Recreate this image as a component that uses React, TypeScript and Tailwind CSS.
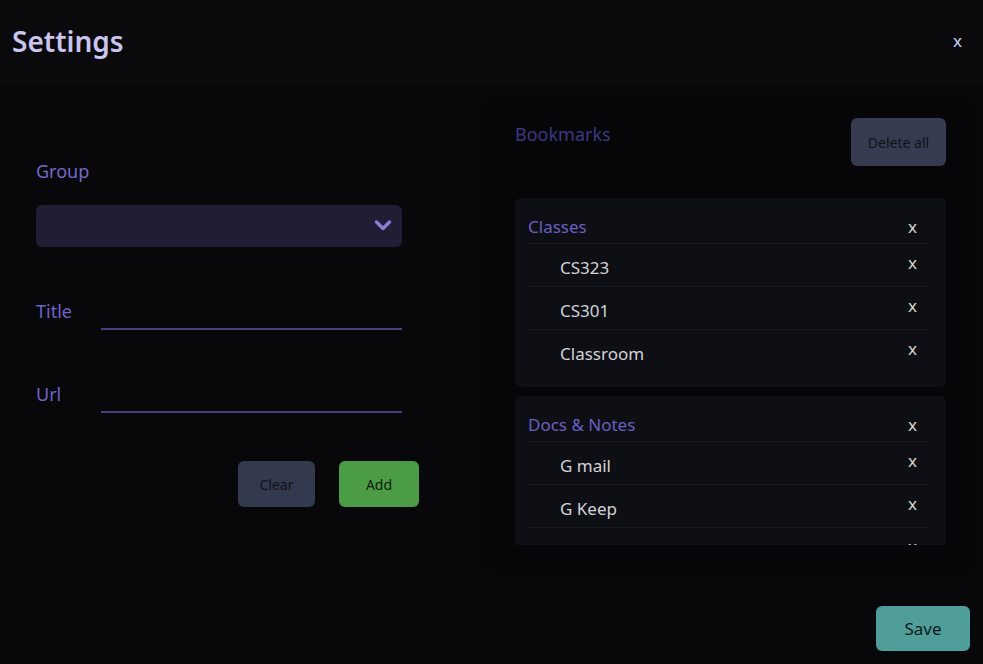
import { useState } from "react";

type Bookmark = { title: string; url: string };
type Group = { name: string; items: Bookmark[] };

const initialGroups: Group[] = [
    {
        name: "Classes",
        items: [
            { title: "CS323", url: "" },
            { title: "CS301", url: "" },
            { title: "Classroom", url: "" },
        ],
    },
    {
        name: "Docs & Notes",
        items: [
            { title: "G mail", url: "" },
            { title: "G Keep", url: "" },
            { title: "G Drive", url: "" },
        ],
    },
];

const App = () => {
    const [groups, setGroups] = useState<Group[]>(initialGroups);
    const [group, setGroup] = useState("");
    const [title, setTitle] = useState("");
    const [url, setUrl] = useState("");

    const removeGroup = (name: string) => setGroups(groups.filter((g) => g.name !== name));
    const removeItem = (name: string, idx: number) =>
        setGroups(
            groups.map((g) =>
                g.name === name ? { ...g, items: g.items.filter((_, i) => i !== idx) } : g
            )
        );

    return (
        <div
            className="w-full h-[664px] bg-[#08080b] flex flex-col overflow-hidden"
            style={{ fontFamily: '"Noto Sans", "Open Sans", sans-serif' }}
        >
            {/* header */}
            <header className="h-[85px] shrink-0 bg-[#0a0a0d] flex items-center justify-between pl-3 pr-[21px]">
                <h1 className="text-[28px] font-semibold text-[#c9c5ee] leading-none pb-1">Settings</h1>
                <button className="text-[17px] text-[#c9d2f5] leading-none pb-1">x</button>
            </header>

            <main className="flex flex-1">
                {/* form */}
                <section className="w-[490px] pl-9 pt-[73px] shrink-0">
                    <label className="block text-[18px] leading-[27px] text-[#7468c8]">Group</label>
                    <div className="relative mt-5 w-[366px]">
                        <select
                            value={group}
                            onChange={(e) => setGroup(e.target.value)}
                            className="w-full h-[42px] rounded-md bg-[#211d35] appearance-none outline-none text-[#c9c5ee] px-3"
                        >
                            <option value=""></option>
                            {groups.map((g) => (
                                <option key={g.name} value={g.name}>{g.name}</option>
                            ))}
                        </select>
                        <svg
                            className="absolute right-[10px] top-[14px] pointer-events-none"
                            width="18"
                            height="13"
                            viewBox="0 0 18 13"
                        >
                            <path d="M2.5 3 L9 9.5 L15.5 3" fill="none" stroke="#8a7ed3" strokeWidth="3.4" strokeLinecap="round" strokeLinejoin="round" />
                        </svg>
                    </div>

                    <div className="flex items-end mt-[47px] w-[366px]">
                        <span className="w-[65px] text-[18px] leading-[27px] text-[#6f63c9] pb-[5px]">Title</span>
                        <input
                            value={title}
                            onChange={(e) => setTitle(e.target.value)}
                            className="flex-1 h-[36px] bg-transparent border-b-2 border-[#4b3f80] outline-none text-[#d0d0d8]"
                        />
                    </div>

                    <div className="flex items-end mt-[47px] w-[366px]">
                        <span className="w-[65px] text-[18px] leading-[27px] text-[#6f63c9] pb-[5px]">Url</span>
                        <input
                            value={url}
                            onChange={(e) => setUrl(e.target.value)}
                            className="flex-1 h-[36px] bg-transparent border-b-2 border-[#4b3f80] outline-none text-[#d0d0d8]"
                        />
                    </div>

                    <div className="flex justify-end gap-6 mt-[48px] w-[383px]">
                        <button
                            onClick={() => { setTitle(""); setUrl(""); setGroup(""); }}
                            className="w-[77px] h-[46px] rounded-md bg-[#343a4e] text-[14px] text-[#10111a]"
                        >
                            Clear
                        </button>
                        <button className="w-[80px] h-[46px] rounded-md bg-[#4c9c45] text-[14px] text-[#0f1a10]">
                            Add
                        </button>
                    </div>
                </section>

                {/* bookmarks */}
                <section className="mt-5 w-[478px] h-[460px] rounded-xl bg-[#060608] shadow-[0_0_10px_rgba(0,0,0,0.6)] pl-[25px] pr-[22px] pt-[13px] flex flex-col">
                    <div className="flex justify-between items-start">
                        <h2 className="text-[18px] leading-[27px] text-[#3d3783] pt-[3px]">Bookmarks</h2>
                        <button
                            onClick={() => setGroups([])}
                            className="w-[95px] h-[48px] rounded-md bg-[#363b4f] text-[14px] text-[#10111a]"
                        >
                            Delete all
                        </button>
                    </div>

                    <div className="mt-8 h-[347px] overflow-hidden flex flex-col gap-[9px]">
                        {groups.map((g) => (
                            <div key={g.name} className="rounded-md bg-[#0e0f14] pl-[13px] pr-[18px] pt-3 pb-[14px] shrink-0">
                                <div className="h-[34px] flex items-center justify-between border-b border-[#181a21]">
                                    <span className="text-[17px] text-[#6a5fc0]">{g.name}</span>
                                    <button
                                        onClick={() => removeGroup(g.name)}
                                        className="text-[17px] text-[#d9d5c8] mr-[11px]"
                                    >
                                        x
                                    </button>
                                </div>
                                {g.items.map((b, i) => (
                                    <div
                                        key={b.title}
                                        className={`h-[43px] flex items-start justify-between pt-[10px] ${i < g.items.length - 1 ? "border-b border-[#181a21]" : ""}`}
                                    >
                                        <span className="pl-8 text-[17px] leading-[27px] text-[#d2d2d8]">{b.title}</span>
                                        <button
                                            onClick={() => removeItem(g.name, i)}
                                            className="mt-[-5px] mr-[11px] text-[17px] leading-[27px] text-[#d9d5c8]"
                                        >
                                            x
                                        </button>
                                    </div>
                                ))}
                            </div>
                        ))}
                    </div>
                </section>
            </main>

            <footer className="h-[79px] shrink-0 flex justify-end items-start pt-[21px] pr-[13px]">
                <button className="w-[94px] h-[45px] rounded-md bg-[#4f9e99] text-[17px] text-[#0e1a1a]">
                    Save
                </button>
            </footer>
        </div>
    );
};

export default App;
